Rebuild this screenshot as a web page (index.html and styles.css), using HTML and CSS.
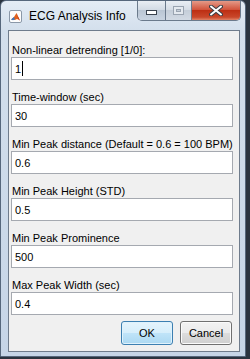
FILE: index.html
```html
<!DOCTYPE html>
<html lang="en">
<head>
  <meta charset="UTF-8" />
  <title>ECG Analysis Info</title>
  <link rel="stylesheet" href="styles.css">
</head>
<body>
  <div class="window">
    <div class="titlebar">
      <svg class="app-icon" width="13" height="13" viewBox="0 0 13 13">
        <rect x="0.5" y="0.5" width="12" height="12" rx="1.5" fill="#fdfdfd" stroke="#8b98a8"/>
        <path d="M2 9.5 L5 7 L7.5 3 L9 6.5 L11 10.5 L8 9 L6 10 Z" fill="#e3621c"/>
        <path d="M7.5 3 L9 6.5 L11 10.5 L9.2 8.6 Z" fill="#b3261e"/>
        <path d="M2 9.5 L5 7 L6 9.2 L4 10.2 Z" fill="#3a78c2"/>
      </svg>
      <span class="title">ECG Analysis Info</span>
      <div class="caption">
        <div class="cap-btn cap-min"><span class="min-bar"></span></div>
        <div class="cap-btn cap-max"><span class="max-box"></span></div>
        <div class="cap-btn cap-close">
          <svg width="14" height="11" viewBox="0 0 14 11">
            <path d="M2 1.5 L12 9.5 M12 1.5 L2 9.5" stroke="#3b3f46" stroke-width="4" stroke-linecap="round"/>
            <path d="M2 1.5 L12 9.5 M12 1.5 L2 9.5" stroke="#ffffff" stroke-width="2" stroke-linecap="round"/>
          </svg>
        </div>
      </div>
    </div>

    <div class="client">
      <div class="field">
        <label>Non-linear detrending [1/0]:</label>
        <div class="edit">1<span class="caret"></span></div>
      </div>
      <div class="field">
        <label>Time-window (sec)</label>
        <div class="edit">30</div>
      </div>
      <div class="field">
        <label>Min Peak distance (Default = 0.6 = 100 BPM)</label>
        <div class="edit">0.6</div>
      </div>
      <div class="field">
        <label>Min Peak Height (STD)</label>
        <div class="edit">0.5</div>
      </div>
      <div class="field">
        <label>Min Peak Prominence</label>
        <div class="edit">500</div>
      </div>
      <div class="field">
        <label>Max Peak Width (sec)</label>
        <div class="edit">0.4</div>
      </div>

      <div class="buttons">
        <button class="btn btn-default">OK</button>
        <button class="btn">Cancel</button>
      </div>
    </div>
  </div>
</body>
</html>
```

FILE: styles.css
```css
* {
  margin: 0;
  padding: 0;
  box-sizing: border-box;
}
body {
  background: #2b3440;
  font-family: 'Liberation Sans', Arial, sans-serif;
  font-size: 11px;
  color: #000;
}
.window {
  width: 246px;
  height: 357px;
  border: 1px solid #56677c;
  border-radius: 6px 6px 0 0;
  background: linear-gradient(#e4ecf5, #d3dfec 30px, #c6d5e7);
}
.titlebar {
  display: flex;
  align-items: flex-start;
  height: 29px;
}
.app-icon {
  margin: 9px 0 0 8px;
}
.title {
  margin: 8px 0 0 7px;
  font-size: 12px;
  color: #000;
}
.caption {
  margin-left: auto;
  margin-right: 4px;
  display: flex;
  height: 20px;
  border: 1px solid #6b7a8c;
  border-top: none;
  border-radius: 0 0 5px 5px;
  overflow: hidden;
}
.cap-btn {
  display: flex;
  align-items: center;
  justify-content: center;
  height: 100%;
}
.cap-min {
  width: 28px;
  border-right: 1px solid #6b7a8c;
  background: linear-gradient(#e9eef4, #d3dbe5 45%, #bac6d4 50%, #c9d4e1);
}
.cap-max {
  width: 26px;
  border-right: 1px solid #6b7a8c;
  background: linear-gradient(#e9eef4, #d6dde6 45%, #c5ced9 50%, #d2dae4);
}
.cap-close {
  width: 48px;
  background: linear-gradient(#e49a88, #d2553d 45%, #bd2f14 50%, #c9472a 85%, #e08468);
}
.min-bar {
  width: 11px;
  height: 5px;
  background: #fff;
  border: 1px solid #39424e;
  margin-top: 3px;
}
.max-box {
  width: 11px;
  height: 9px;
  border: 1px solid #9aa4b1;
  box-shadow: inset 0 0 0 2px #e4e9ef, inset 0 0 0 3px #9aa4b1;
}
.client {
  margin: 0 5px 0 7px;
  height: 322px;
  border: 1px solid #6f7c8c;
  background: #f0f0f0;
  padding: 13px 6px 0 2px;
}
.field {
  margin-bottom: 11px;
}
.field label {
  display: block;
  line-height: 13px;
  padding-left: 1px;
  white-space: nowrap;
}
.edit {
  display: flex;
  align-items: center;
  height: 23px;
  background: #fff;
  border: 1px solid #a5a9b0;
  padding-left: 3px;
}
.caret {
  width: 1px;
  height: 15px;
  background: #000;
  margin-left: 1px;
}
.buttons {
  display: flex;
  justify-content: flex-end;
  gap: 7px;
  margin-top: -5px;
  padding-right: 1px;
}
.btn {
  width: 52px;
  height: 24px;
  font-family: 'Liberation Sans', Arial, sans-serif;
  font-size: 11px;
  color: #000;
  border: 1px solid #707070;
  border-radius: 3px;
  background: linear-gradient(#f2f2f2, #ebebeb 49%, #dddddd 50%, #cfcfcf);
  box-shadow: inset 0 0 0 1px #fbfbfb;
}
.btn-default {
  border-color: #3c7fb1;
  background: linear-gradient(#e5f4fc, #d6eefb 49%, #c0e4f8 50%, #abd8f2);
  box-shadow: inset 0 0 0 1px #dff2fc;
}
```
